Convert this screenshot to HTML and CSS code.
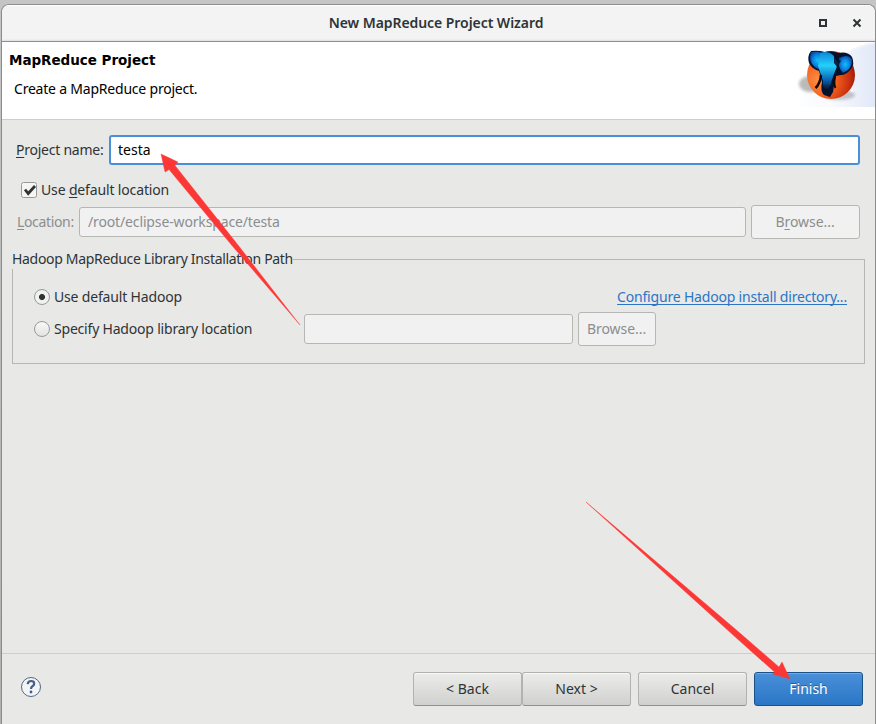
FILE: index.html
```html
<!DOCTYPE html>
<html lang="en">
<head>
<meta charset="utf-8">
<title>New MapReduce Project Wizard</title>
<link rel="stylesheet" href="styles.css">
</head>
<body>
<main class="window">
  <header class="titlebar">
    <h1 class="window-title">New MapReduce Project Wizard</h1>
    <svg class="window-controls" width="46" height="12" viewBox="0 0 46 12">
      <rect x="2" y="3" width="6" height="6" fill="none" stroke="#2e3436" stroke-width="2"/>
      <path d="M35.500 2.500l7 7M42.500 2.500l-7 7" stroke="#2e3436" stroke-width="2" fill="none"/>
    </svg>
  </header>
  <section class="banner">
    <div class="banner-text">
      <h2>MapReduce Project</h2>
      <p class="desc">Create a MapReduce project.</p>
    </div>
    <svg class="banner-art" width="79" height="66" viewBox="796 42 79 66">
      <defs>
        <linearGradient id="sky"><stop offset="0" stop-color="#fff"/><stop offset="1" stop-color="#d9e2f5"/></linearGradient>
        <radialGradient id="ball" cx=".25" cy=".6" r=".85"><stop offset="0" stop-color="#ff8f45"/><stop offset=".4" stop-color="#f4631e"/><stop offset=".75" stop-color="#c9300e"/><stop offset="1" stop-color="#7a1003"/></radialGradient>
        <radialGradient id="ear"><stop offset="0" stop-color="#14bdfb"/><stop offset=".6" stop-color="#0a84e0"/><stop offset="1" stop-color="#0650a6"/></radialGradient>
        <linearGradient id="trunk" x2="0" y2="1"><stop offset="0" stop-color="#0b86d8"/><stop offset=".35" stop-color="#25d0fb"/><stop offset=".7" stop-color="#0a68b8"/><stop offset="1" stop-color="#020a1c"/></linearGradient>
        <filter id="soft" x="-30%" y="-30%" width="160%" height="160%"><feGaussianBlur stdDeviation="1.800"/></filter>
        <filter id="blend"><feGaussianBlur stdDeviation=".6"/></filter>
      </defs>
      <path d="M796 107Q830 48 875 42V107Z" fill="url(#sky)" opacity=".5"/>
      <path d="M838 60Q855 47 875 44V107H825Z" fill="url(#sky)" opacity=".6"/>
      <ellipse cx="810" cy="84" rx="11" ry="8" fill="#777" opacity=".5" filter="url(#soft)"/>
      <ellipse cx="839" cy="95" rx="16" ry="5" fill="#777" opacity=".4" filter="url(#soft)"/>
      <circle cx="831" cy="75" r="24" fill="url(#ball)"/>
      <path d="M811 51Q818 50 825 52Q832 50 838 53Q848 51 852 57Q855 64 851 69Q846 75 841 75L836 76Q834 84 833 92L830 97L824 95Q820 91 822 82L819 71Q812 69 809 63Q807 56 811 51Z" fill="#04122e"/>
      <g filter="url(#blend)">
        <path d="M811 52Q820 50 825 55L824 69L818 69Q810 65 810 57Z" fill="url(#ear)"/>
        <path d="M839 58Q849 53 852 60Q852 66 848 70L843 73Q837 67 839 58Z" fill="url(#ear)"/>
        <path d="M820 53Q828 50 833 55L838 63L836 69Q832 78 831 84L827 91Q822 88 823 81L818 66Z" fill="url(#trunk)"/>
      </g>
      <path d="M834 55L841 61L837 67L834 63Z" fill="#031027" opacity=".85"/>
      <path d="M821 75Q820 84 815.500 88" fill="none" stroke="#10070a" stroke-width="2.400"/>
      <path d="M835 76Q833.500 84 835.500 88" fill="none" stroke="#10070a" stroke-width="2"/>
      <circle cx="852" cy="91" r=".9" fill="#fff"/>
    </svg>
  </section>
  <section class="content">
    <div class="row name-row">
      <label class="t-name"><u>P</u>roject name:</label>
      <div class="entry focused"><span class="t-testa">testa</span></div>
    </div>
    <div class="row check-row">
      <svg class="check" width="16" height="17" viewBox="0 0 16 17"><rect x=".5" y=".5" width="15" height="15" rx="2" fill="#f5f5f4" stroke="#999a96"/><path d="M4 7.500l3.200 4L14 4" fill="none" stroke="#2e3436" stroke-width="2.800"/></svg>
      <span class="t-defloc">Use <u>d</u>efault location</span>
    </div>
    <div class="row location-row">
      <label class="t-loc"><u>L</u>ocation:</label>
      <div class="entry disabled"><span class="t-path">/root/eclipse-workspace/testa</span></div>
      <div class="button disabled wide"><span class="t-browse">B<u>r</u>owse...</span></div>
    </div>
    <fieldset class="group">
      <legend><span class="t-group">Hadoop MapReduce Library Installation Path</span></legend>
      <div class="row radio-row">
        <i class="radio selected"></i><span class="t-usehadoop">Use default Hadoop</span>
        <a class="link">Configure Hadoop install directory...</a>
      </div>
      <div class="row specify-row">
        <i class="radio"></i><span class="t-specify">Specify Hadoop library location</span>
        <div class="entry disabled small"></div>
        <div class="button disabled narrow"><span class="t-browse">Browse...</span></div>
      </div>
    </fieldset>
  </section>
  <footer class="footer">
    <svg class="help" width="22" height="22" viewBox="0 0 22 22"><circle cx="11" cy="11" r="9.500" fill="#f3f4f5" stroke="#536989"/><path d="M7.700 8.200Q8 5 11.200 5Q14.200 5 14.200 7.700Q14.200 9.200 12.400 10.300Q11 11.200 11 13" fill="none" stroke="#475f86" stroke-width="2.200"/><circle cx="11" cy="16" r="1.400" fill="#475f86"/></svg>
    <div class="pair">
      <div class="button"><span>&lt; Back</span></div>
      <div class="button"><span>Next &gt;</span></div>
    </div>
    <div class="button"><span>Cancel</span></div>
    <div class="button primary"><span>Finish</span></div>
  </footer>
</main>
<svg class="arrows" width="876" height="724" viewBox="0 0 876 724">
  <path d="M161 154L178 162L175 165.500L238 245L300 325L231.500 245L169 169.500L165 172Z"/>
  <path d="M790 679L772.500 674L774.500 672L736.700 638.300L586 502L736.700 630.300L779 667L782 662Z"/>
</svg>
</body>
</html>
```
FILE: styles.css
```css
* { box-sizing: border-box; }
body {
  margin: 0;
  height: 724px;
  overflow: hidden;
  padding: 4px 0 0 1px;
  background: linear-gradient(#c5c5c5, #b8b8b8 60%, #b0b0b0);
  font: 14px/20px "Noto Sans", sans-serif;
  color: #2e3436;
}
h1, h2, p { margin: 0; }
span, label, h1, h2, p, a { white-space: nowrap; }
u { text-underline-offset: 2px; text-decoration-thickness: 1px; }
.window {
  width: 875px;
  height: 720px;
  display: flex;
  flex-direction: column;
  border: 1px solid #8c8d8b;
  border-bottom: 0;
  border-radius: 8px 8px 0 0;
  background: #e8e8e6;
  overflow: hidden;
}
.titlebar {
  height: 37px;
  flex: none;
  display: grid;
  grid-template-columns: 1fr auto 1fr;
  align-items: center;
  border-bottom: 1px solid #90918b;
  background: linear-gradient(#fff 0 1px, #f3f3f3 1px 34px, #dededb 36px);
}
.window-title { grid-column: 2; font-size: 14px; font-weight: 600; line-height: 20px; letter-spacing: -.06px; margin-right: 5px; }
.window-controls { justify-self: end; margin-right: 11px; }
.banner {
  height: 78px;
  flex: none;
  display: flex;
  justify-content: space-between;
  background: #fff;
  border-bottom: 1px solid #cdcdca;
  color: #000;
}
.banner-text { padding: 8px 0 0 7px; }
.banner h2 { font: bold 13.500px/20px "DejaVu Sans", sans-serif; letter-spacing: -.03px; }
.desc { padding: 9px 0 0 5px; letter-spacing: -.21px; }
.banner-art { flex: none; }
.content { flex: 1; padding: 15px 10px 0; }
.row { display: flex; align-items: center; }
.name-row { height: 30px; padding: 0 5px 0 5px; }
.t-name { width: 93px; margin-left: -1px; letter-spacing: -.24px; }
.entry { flex: 1; display: flex; align-items: center; padding-left: 8px; border: 1px solid #b6b6b3; border-radius: 3px; height: 30px; }
.focused { height: 30px; padding-left: 7px; border: 2px solid #4a90d9; background: #fff; color: #000; }
.check-row { height: 20px; margin-top: 15px; padding-left: 9px; gap: 4px; }
.t-defloc { letter-spacing: -.15px; }
.location-row { height: 34px; margin-top: 5px; padding: 0 5px; color: #8b8e8f; }
.t-loc { width: 62px; letter-spacing: -.35px; }
.t-path { letter-spacing: -.14px; }
.t-browse { letter-spacing: -.05px; margin-right: 1px; }
.disabled { background: #f1f1f1; color: #8b8e8f; }
.button {
  width: 109px;
  height: 34px;
  flex: none;
  display: flex;
  align-items: center;
  justify-content: center;
  border: 1px solid #b2b2af;
  border-bottom-color: #91918e;
  border-radius: 3px;
  background: linear-gradient(#ececea, #d0d0ce);
  box-shadow: inset 0 1px #f8f8f7;
}
.button.disabled { background: #f1f1f1; border-color: #b6b6b3; box-shadow: none; }
.wide { margin-left: 5px; }
.group { margin: 10px 0 0; padding: 0; height: 115px; border: 1px solid #b6b6b3; min-width: 0; }
legend { padding: 0; height: 20px; margin-left: -1px; }
.t-group { letter-spacing: -.32px; }
.radio-row { height: 20px; margin-top: 18px; padding: 0 17px 0 21px; }
.t-usehadoop { letter-spacing: -.17px; }
.radio {
  width: 16px;
  height: 16px;
  flex: none;
  margin-right: 4px;
  border: 1px solid #999a96;
  border-radius: 50%;
  background: linear-gradient(#f8f8f8, #e3e3e1);
}
.selected { background: radial-gradient(circle, #2e3436 0 2.700px, #f1f1f0 3.300px); }
.link { margin-left: auto; letter-spacing: -.19px; color: #2a76c6; text-decoration: underline; text-decoration-thickness: 1px; text-underline-offset: 2px; text-decoration-skip-ink: none; }
.specify-row { height: 34px; margin-top: 5px; padding-left: 21px; }
.t-specify { width: 250px; letter-spacing: -.2px; }
.small { flex: none; width: 269px; }
.narrow { width: 78px; margin-left: 5px; }
.footer {
  height: 71px;
  flex: none;
  display: flex;
  align-items: flex-start;
  gap: 7px;
  padding: 18px 12px 0 18px;
  border-top: 1px solid #cdcdca;
}
.help { margin: 4px auto 0 0; }
.pair { display: flex; }
.primary { border-color: #1c5187; background: linear-gradient(#4a90d9, #2a76c6); box-shadow: inset 0 1px #75aae1; color: #fff; text-shadow: 0 -1px #235f9e; }
.arrows { position: absolute; inset: 0; fill: #fc3836; stroke: #fc3836; stroke-width: .4; pointer-events: none; }
```
